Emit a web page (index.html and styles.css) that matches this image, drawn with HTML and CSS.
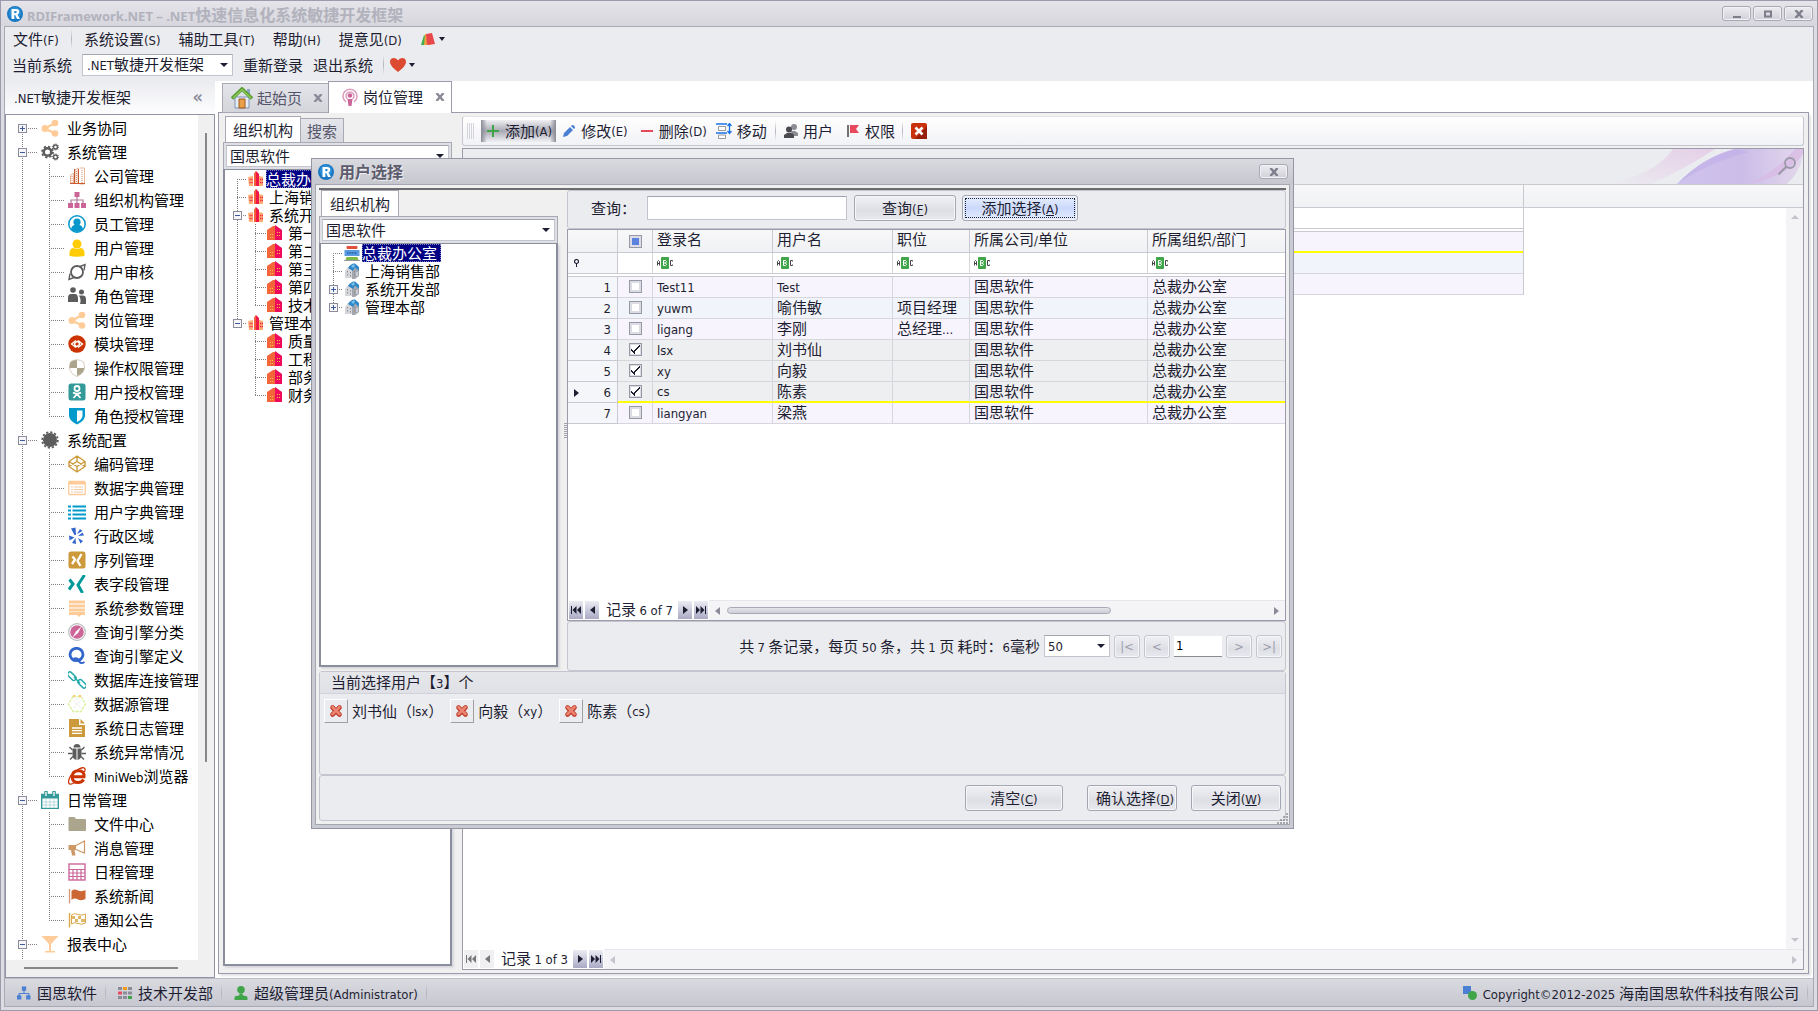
FILE: index.html
```html
<!DOCTYPE html>
<html lang="zh-CN">
<head>
<meta charset="utf-8">
<title>RDIFramework.NET</title>
<link rel="stylesheet" href="styles.css">
</head>
<body>
<svg class="sprite" aria-hidden="true">
  <symbol id="i-logo" viewBox="0 0 16 16"><circle cx="8" cy="8" r="8" fill="#1a78c2"/><circle cx="8" cy="7" r="6" fill="#2a8fd8"/><path d="M4.500 3h4.600q3.200 0 3.200 2.800 0 2-1.900 2.600L13 13h-2.900L8.200 8.900H7.300V13H4.500zM7.300 5v2.200h1.400q1.100 0 1.100-1.100T8.700 5z" fill="#fff"/></symbol>
  <symbol id="i-share" viewBox="0 0 18 18"><path d="M4 9.500 14 4M4 9.500 14 14.500" stroke="#fc9" stroke-width="2.500"/><circle cx="4" cy="9.500" r="3.500" fill="#fc9"/><circle cx="14" cy="4" r="3.300" fill="#fc9"/><circle cx="14" cy="14.500" r="3.300" fill="#fc9"/></symbol>
  <symbol id="i-gears" viewBox="0 0 18 18"><g fill="none" stroke="#5c5c5c"><circle cx="6.500" cy="9" r="3.800" stroke-width="2.600"/><circle cx="6.500" cy="9" r="5.500" stroke-width="1.800" stroke-dasharray="2.200 2.100"/><circle cx="14.500" cy="4" r="2" stroke-width="1.500"/><circle cx="14.500" cy="4" r="3" stroke-dasharray="1.200 1.100"/><circle cx="14.500" cy="14" r="2" stroke-width="1.500"/><circle cx="14.500" cy="14" r="3" stroke-dasharray="1.200 1.100"/></g></symbol>
  <symbol id="i-company" viewBox="0 0 18 18"><path d="M2.500 17V8l3-1.500V17M7 17V3l3-2v16M11.500 1h5v16h-5" fill="none" stroke="#e8b49c"/><path d="M8.500 4v12M4 9v7M14 3v13" stroke="#d98a66" stroke-dasharray="1 1"/><path d="M6.500 2v15M10.500 2v15M2 16.500h15" stroke="#c95b2e"/></symbol>
  <symbol id="i-sitemap" viewBox="0 0 18 18"><path d="M3 12V9h12v3M9 4v8" fill="none" stroke="#aa7b97" stroke-width="1.200"/><path d="M6.500 1h5v5h-5zM0 12h5v5H0zM6.500 12h5v5h-5zM13 12h5v5h-5z" fill="#c69"/></symbol>
  <symbol id="i-staff" viewBox="0 0 18 18"><circle cx="9" cy="9" r="8.200" fill="#fff" stroke="#0997cc" stroke-width="1.500"/><circle cx="9" cy="7" r="3.600" fill="#0997cc"/><path d="M3 14q1-4 4-4h4q3 0 4 4-2.500 3-6 3t-6-3z" fill="#0997cc"/></symbol>
  <symbol id="i-user" viewBox="0 0 18 18"><circle cx="9" cy="5" r="4.500" fill="#fc0"/><path d="M1.500 17v-3.500q.5-4.500 4-4.500 3.500 2 7 0 3.500 0 4 4.500V17q-7.500 1.500-15 0z" fill="#fc0"/></symbol>
  <symbol id="i-audit" viewBox="0 0 18 18"><circle cx="9" cy="9" r="6" fill="none" stroke="#5c5c5c" stroke-width="1.800"/><path d="M12 3.500l5-2-1 6M6 14.500l-5 2 1-6" fill="none" stroke="#5c5c5c" stroke-width="1.400"/></symbol>
  <symbol id="i-roles" viewBox="0 0 18 18"><g fill="#5c5c5c"><circle cx="5" cy="3" r="2.800"/><path d="M0 14V11q0-4 3-4h4q3 0 3 5v3H0z"/><circle cx="13.500" cy="5" r="2.500"/><path d="M11 8.500h4q3 0 3 4V17h-6q1.500-4-1-8.500z"/></g></symbol>
  <symbol id="i-module" viewBox="0 0 18 18"><circle cx="9" cy="9" r="8.700" fill="#c30"/><path d="M8 5.500 3.500 9 8 12.500M10 5.500 14.500 9 10 12.500M6 9l3-2.500M12 9l-3 2.500M9 6l3 3M9 12 6 9" fill="none" stroke="#fff" stroke-width="1.300"/></symbol>
  <symbol id="i-perm" viewBox="0 0 18 18"><path d="M9 .7Q13 1 15.500 3q1 3 1 6-1 6-7.500 8.500Q2.500 15 1.500 9q0-3 1-6Q5 1 9 .7z" fill="#fff" stroke="#d9cdc4"/><path d="M9 1v8H1.500q0-3 1-6Q5 1.200 9 1zM9 9h7.500q-1 5.500-7.500 8z" fill="#aaa58c"/></symbol>
  <symbol id="i-ok" viewBox="0 0 18 18"><rect x=".5" y=".5" width="17" height="17" rx="2.500" fill="#399"/><circle cx="9" cy="5.500" r="2.500" fill="none" stroke="#fff" stroke-width="1.800"/><path d="M5 9.500q4 2.500 8 0M9 11l-3.500 4M9 11l3.500 4" fill="none" stroke="#fff" stroke-width="1.800"/></symbol>
  <symbol id="i-shield" viewBox="0 0 18 18"><path d="M1 1h16v8q-1 5.500-8 8.500Q2 14.500 1 9z" fill="#09c"/><path d="M9 3.500h5.500V9Q14 12.500 9 15z" fill="#fff"/></symbol>
  <symbol id="i-gear" viewBox="0 0 18 18"><circle cx="9" cy="9" r="7" fill="#5c5c5c"/><circle cx="9" cy="9" r="7.800" fill="none" stroke="#5c5c5c" stroke-width="1.800" stroke-dasharray="2.200 1.880"/></symbol>
  <symbol id="i-codepen" viewBox="0 0 18 18"><path d="M9 1l8 5.500v5L9 17l-8-5.500v-5zM1 6.500l8 5 8-5M1 11.500l8-5 8 5M9 1v5.500M9 11.500V17" fill="none" stroke="#cc9a3a" stroke-width="1.400"/></symbol>
  <symbol id="i-card" viewBox="0 0 18 18"><rect x=".7" y="2.500" width="16.600" height="13" rx="1" fill="#fff" stroke="#fc9" stroke-width="1.300"/><path d="M1 4h16" stroke="#fc9" stroke-width="3"/><path d="M3 8h2M6 8h9M3 10.500h2M6 10.500h9M3 13h2M6 13h9" stroke="#f0c9a6"/></symbol>
  <symbol id="i-list" viewBox="0 0 18 18"><path d="M0 3.500h3M4.500 3.500H18M0 7.500h3M4.500 7.500H18M0 11.500h3M4.500 11.500H18M0 15.500h3M4.500 15.500H18" stroke="#09c" stroke-width="2.200"/></symbol>
  <symbol id="i-yelp" viewBox="0 0 18 18"><path d="M3 1.500 7.500.5 8 8 6.500 8zM1 8.500l5.500 2-5 3zM7.500 11l.5 6-4-1zM10 11l5 3-2.500 2.500zM10 9l6-.5-1.500-3zM9 7l3-5 2.500 2z" fill="#36c"/></symbol>
  <symbol id="i-xingsq" viewBox="0 0 18 18"><rect x=".5" y=".5" width="17" height="17" rx="2.500" fill="#cc9a3a"/><path d="M4.500 5.500l2.500 3-3 4.500M13.500 3l-4 7 3 5" fill="none" stroke="#fff" stroke-width="2.300"/></symbol>
  <symbol id="i-xing" viewBox="0 0 18 18"><path d="M1.500 4.500 5 9l-4 5.500M16.500 0 10 10l4.500 8" fill="none" stroke="#099" stroke-width="3"/></symbol>
  <symbol id="i-stack" viewBox="0 0 18 18"><path d="M1 3h16M1 7h16M1 11h16M1 14.500h16" stroke="#fc9" stroke-width="2.800"/><path d="M8 15h6l-3 3z" fill="#fc9"/></symbol>
  <symbol id="i-safari" viewBox="0 0 18 18"><circle cx="9" cy="9" r="8.300" fill="#fff" stroke="#bbb" stroke-width="1.200"/><circle cx="9" cy="9" r="6.800" fill="#c69"/><path d="M13.500 3.500 10 10l-5.500 4.500L8 8.500z" fill="#fff"/></symbol>
  <symbol id="i-quora" viewBox="0 0 18 18"><ellipse cx="8.500" cy="7.500" rx="6.500" ry="6.200" fill="none" stroke="#36c" stroke-width="2.800"/><path d="M6 11.500q3.500-1 5 2.500t5.500 1" fill="none" stroke="#36c" stroke-width="2"/></symbol>
  <symbol id="i-link" viewBox="0 0 18 18"><g fill="none" stroke="#2aa" stroke-width="1.500"><rect x="-1" y="3" width="10" height="4.500" rx="2.200" transform="rotate(45 4 5)"/><rect x="9" y="10.500" width="10" height="4.500" rx="2.200" transform="rotate(45 14 13)"/><path d="M6 6l6 6"/></g></symbol>
  <symbol id="i-hex" viewBox="0 0 18 18"><path d="M5 1.500h8L17.500 9 13 16.500H5L.5 9z" fill="none" stroke="#d8ee9a" stroke-width="1.300" stroke-dasharray="3 1"/><path d="M5 5l8 8M13 5l-8 8M5 1.500 9 5l4-3.500" fill="none" stroke="#eee"/><path d="M5 1h2M11 1h2" stroke="#fc6" stroke-width="2"/></symbol>
  <symbol id="i-file" viewBox="0 0 18 18"><path d="M1 0h10v6h6v12H1zM12.500 0 17 4.500h-4.500z" fill="#cc9a3a"/><path d="M4 9h10M4 11.700h10M4 14.400h10" stroke="#fff" stroke-width="1.300"/></symbol>
  <symbol id="i-bug" viewBox="0 0 18 18"><path d="M5.500 4.500q0-3.500 3.500-3.500t3.500 3.500zM4.500 5.500h4V17q-4-1-4-5zM9.500 5.500h4V12q0 4-4 5z" fill="#5c5c5c"/><path d="M1.500 4l3 3M16.500 4l-3 3M0 10.500h4.500M13.500 10.500H18M2 16.500l3-3M16 16.500l-3-3" stroke="#5c5c5c" stroke-width="1.400"/></symbol>
  <symbol id="i-ie" viewBox="0 0 18 18"><path d="M4 9.800h12q.5-6-5.500-6T4 9.800q.5 5.700 6 5.700 4 0 5.500-3" fill="none" stroke="#c30" stroke-width="3"/><path d="M9 3q7-4 8-1 .3 1-.5 3M3 8Q-1 15 1.500 17q2 .7 5-1.500" fill="none" stroke="#c30" stroke-width="1.300"/></symbol>
  <symbol id="i-calendar" viewBox="0 0 18 18"><rect x=".7" y="3.500" width="16.600" height="14" fill="#fff" stroke="#399" stroke-width="1.400"/><path d="M1 5.500h16" stroke="#399" stroke-width="4"/><path d="M5 8v9M9 8v9M13 8v9M1 11h16M1 14h16" stroke="#a6d2d2" stroke-width=".8"/><path d="M5 1v4M13 1v4" stroke="#399" stroke-width="3.600" stroke-linecap="round"/><path d="M5 1v4M13 1v4" stroke="#fff" stroke-width="1.300"/></symbol>
  <symbol id="i-folder" viewBox="0 0 18 18"><path d="M.5 3q0-1 1-1h5l1.500 2H17q1 0 1 1v10q0 1-1 1H1.500q-1 0-1-1z" fill="#aaa58c"/></symbol>
  <symbol id="i-horn" viewBox="0 0 18 18"><path d="M.5 6H8v5H6.500l1 5.500H4L3 11H.5z" fill="#c96"/><path d="M8 6.500 16.500 2v12L8 10.500" fill="none" stroke="#c96" stroke-width="1.200"/></symbol>
  <symbol id="i-sheet" viewBox="0 0 18 18"><rect x="1" y="1" width="16" height="16" fill="#fff" stroke="#c69" stroke-width="1.400"/><path d="M1 6.500h16M1 10h16M1 13.500h16M5 6v11M9 6v11M13 6v11" stroke="#c69" stroke-width="1.200"/></symbol>
  <symbol id="i-flag" viewBox="0 0 18 18"><path d="M1.500 2v14.500" stroke="#d99a7a" stroke-width="1.400"/><path d="M3.500 4q3-2.500 6.500-.5 4 1.500 7.500-.5v9q-4 2-7.500.5-3.500-2-6.500.5z" fill="#c63"/></symbol>
  <symbol id="i-flag2" viewBox="0 0 18 18"><path d="M1.500 2v14.500" stroke="#d9a84a" stroke-width="1.400"/><path d="M3.500 4q3-2.500 6.500-.5 4 1.500 7.500-.5v9q-4 2-7.500.5-3.500-2-6.500.5z" fill="#fff" stroke="#d9a84a"/><path d="M4 5h3v3H4zM10 5h3v3h-3zM7 8h3v3H7zM13 8h4v3h-4z" fill="#e0b865"/></symbol>
  <symbol id="i-glass" viewBox="0 0 18 18"><path d="M.5 1h17L10 9v7h4v1.500H4V16h4V9z" fill="#fc9"/></symbol>
  <symbol id="i-org" viewBox="0 0 16 16"><path d="M0 6l5-1v10H1z" fill="#ffb27a"/><path d="M11 5l4 1v9h-4z" fill="#fcae70"/><path d="M6 3l2-3 3 3v12H6z" fill="#f01848"/><path d="M6 3l2-3v15H6z" fill="#f4603a"/><path d="M1.500 8.500h3M1.500 11.500h3M12 8.500h3M12 11.500h3" stroke="#f0284c" stroke-width="1.500" stroke-dasharray="1.200 .6"/></symbol>
  <symbol id="i-dept" viewBox="0 0 16 16"><path d="M0 5l6-4h3v14H0z" fill="#f4663a"/><path d="M8 0l7 5v10H8z" fill="#f00a5c"/><path d="M10 7h1v1h-1zM12 7h1v1h-1zM10 10h1v1h-1zM12 10h1v1h-1zM3 9h1v1H3zM5 9h1v1H5zM3 12h1v1H3zM5 12h1v1H5z" fill="#ffc04a"/></symbol>
  <symbol id="i-server" viewBox="0 0 16 16"><rect x="2.500" y="1" width="11" height="3" rx="1" fill="#e0503c"/><rect x=".5" y="5" width="15" height="6" fill="#5a9ae0"/><path d="M3 8h10" stroke="#245aa8" stroke-width="1.500" stroke-dasharray="1 .6"/><path d="M2.500 12h11l1 3h-13z" fill="#7cba4a"/><path d="M0 15.500h16" stroke="#999"/></symbol>
  <symbol id="i-house" viewBox="0 0 16 16"><path d="M1 8l3-4 5 3v8H1z" fill="#d4d6da"/><path d="M8 8l3-4 4 4v5l-4 3H8z" fill="#a4a8ae"/><path d="M4 5q3-5 7-4.500L15 4v4l-4-3.500L9 8z" fill="#2d86c8"/><path d="M7 3l3-2 1 2-2 2z" fill="#7cc0e8"/><path d="M3.500 8v6M6.500 9v6M10.500 8v6" stroke="#8c9098" stroke-dasharray="1.500 1.500"/><path d="M13 9v4" stroke="#eef"/></symbol>
  <symbol id="i-home" viewBox="0 0 22 22"><path d="M4 10h14v11H4z" fill="#e6ecf6" stroke="#7a92b8"/><path d="M8 12h6v9H8z" fill="#e8a04a" stroke="#a05a1a"/><path d="M16 2h3v7h-3z" fill="#8aa4cc"/><path d="M1 11.500 11 2l10 9.500" fill="none" stroke="#5a9c32" stroke-width="3.600"/><path d="M2 11 11 2.500 20 11" fill="none" stroke="#8fce5a" stroke-width="1.200"/></symbol>
  <symbol id="i-podcast" viewBox="0 0 16 18"><g fill="none" stroke="#dc9cbc" stroke-width="1.500"><path d="M4 14A7 7 0 1 1 12 14"/><path d="M5.500 11A4 4 0 1 1 10.500 11"/></g><circle cx="8" cy="7.500" r="2.300" fill="#c69"/><path d="M5.500 11h5l-1 7h-3z" fill="#c69"/></symbol>
  <symbol id="i-abc" viewBox="0 0 16 12"><path d="M.5 8.500v-4l1-1 1 1v4M.5 6.500h2M15.500 4.500v-1h-2v5h2v-1" fill="none" stroke="#444"/><rect x="4" y="0" width="8" height="12" rx="1" fill="#3fa548"/><path d="M6.500 3.500h2l1 1-1 1.500 1 1.500-1 1h-2zM6.500 6h2" fill="none" stroke="#fff"/></symbol>
  <symbol id="i-left" viewBox="0 0 5 8"><path d="M5 0v8L0 4z" fill="currentColor"/></symbol>
  <symbol id="i-right" viewBox="0 0 5 8"><path d="M0 0v8l5-4z" fill="currentColor"/></symbol>
  <symbol id="i-first" viewBox="0 0 10 8"><path d="M0 0h1v8H0zM5.500 0v8l-4-4zM10 0v8L6 4z" fill="currentColor"/></symbol>
  <symbol id="i-last" viewBox="0 0 10 8"><path d="M9 0h1v8H9zM0 0v8l4-4zM4.500 0v8l4-4z" fill="currentColor"/></symbol>
  <symbol id="i-cross" viewBox="0 0 10 8"><path d="M1.500 0 8.500 8M8.500 0 1.500 8" stroke="currentColor" stroke-width="2.400"/></symbol>
  <symbol id="i-del" viewBox="0 0 14 14"><path d="M3.500 3.500l7 7M10.500 3.500l-7 7" stroke="#c0402e" stroke-width="4.600" stroke-linecap="round"/><path d="M3.500 3.200l7 7M10.500 3.200l-7 7" stroke="#ec8672" stroke-width="2.600" stroke-linecap="round"/></symbol>
</svg>

<header class="titlebar">
  <svg class="logo"><use href="#i-logo"/></svg>
  <h1><span class="en">RDIFramework.NET – .NET</span>快速信息化系统敏捷开发框架</h1>
  <button class="winbtn" aria-label="最小化"><svg viewBox="0 0 10 8"><path d="M1 7h8" stroke="currentColor" stroke-width="2"/></svg></button>
  <button class="winbtn" aria-label="最大化"><svg viewBox="0 0 10 8"><path d="M2 1.500h6v5H2z" fill="none" stroke="currentColor" stroke-width="2"/></svg></button>
  <button class="winbtn" aria-label="关闭窗口"><svg><use href="#i-cross"/></svg></button>
</header>

<div class="client">
  <nav class="menubar">
    <button>文件<span class="en">(F)</span></button><i class="sep"></i>
    <button>系统设置<span class="en">(S)</span></button>
    <button>辅助工具<span class="en">(T)</span></button>
    <button>帮助<span class="en">(H)</span></button>
    <button>提意见<span class="en">(D)</span></button>
    <button class="drop" aria-label="皮肤"><svg viewBox="0 0 16 16"><path d="M1 14 4 4l4 3v7z" fill="#3fb04c"/><path d="M4 14 5 3l6 1v10z" fill="#f0a040"/><path d="M6 3l6-1 3 11-8 1z" fill="#e8484c"/></svg></button>
  </nav>
  <div class="sysbar">
    <label for="sys">当前系统</label>
    <span class="combo sys"><select id="sys"><option>.NET敏捷开发框架</option></select><span class="shown" aria-hidden="true"><span class="en">.NET</span>敏捷开发框架</span></span>
    <button>重新登录</button>
    <button>退出系统</button>
    <i class="sep"></i>
    <button class="drop" aria-label="收藏"><svg viewBox="0 0 16 16"><path d="M8 15Q0 9 0 5t4-4q3 0 4 2.500Q9 1 12 1q4 0 4 4t-8 10z" fill="#dc4a32"/></svg></button>
  </div>

  <main class="main">
    <aside class="side">
      <div class="side-head"><span><span class="en">.NET</span>敏捷开发框架</span><button aria-label="折叠">«</button></div>
      <div class="side-box">
        <ul class="tree nav">
          <li><div class="node"><button class="exp plus" aria-label="展开"></button><svg><use href="#i-share"/></svg><a href="#">业务协同</a></div></li>
          <li><div class="node"><button class="exp" aria-label="折叠"></button><svg><use href="#i-gears"/></svg><a href="#">系统管理</a></div>
            <ul>
              <li><svg><use href="#i-company"/></svg><a href="#">公司管理</a></li>
              <li><svg><use href="#i-sitemap"/></svg><a href="#">组织机构管理</a></li>
              <li><svg><use href="#i-staff"/></svg><a href="#">员工管理</a></li>
              <li><svg><use href="#i-user"/></svg><a href="#">用户管理</a></li>
              <li><svg><use href="#i-audit"/></svg><a href="#">用户审核</a></li>
              <li><svg><use href="#i-roles"/></svg><a href="#">角色管理</a></li>
              <li><svg><use href="#i-share"/></svg><a href="#">岗位管理</a></li>
              <li><svg><use href="#i-module"/></svg><a href="#">模块管理</a></li>
              <li><svg><use href="#i-perm"/></svg><a href="#">操作权限管理</a></li>
              <li><svg><use href="#i-ok"/></svg><a href="#">用户授权管理</a></li>
              <li><svg><use href="#i-shield"/></svg><a href="#">角色授权管理</a></li>
            </ul></li>
          <li><div class="node"><button class="exp" aria-label="折叠"></button><svg><use href="#i-gear"/></svg><a href="#">系统配置</a></div>
            <ul>
              <li><svg><use href="#i-codepen"/></svg><a href="#">编码管理</a></li>
              <li><svg><use href="#i-card"/></svg><a href="#">数据字典管理</a></li>
              <li><svg><use href="#i-list"/></svg><a href="#">用户字典管理</a></li>
              <li><svg><use href="#i-yelp"/></svg><a href="#">行政区域</a></li>
              <li><svg><use href="#i-xingsq"/></svg><a href="#">序列管理</a></li>
              <li><svg><use href="#i-xing"/></svg><a href="#">表字段管理</a></li>
              <li><svg><use href="#i-stack"/></svg><a href="#">系统参数管理</a></li>
              <li><svg><use href="#i-safari"/></svg><a href="#">查询引擎分类</a></li>
              <li><svg><use href="#i-quora"/></svg><a href="#">查询引擎定义</a></li>
              <li><svg><use href="#i-link"/></svg><a href="#">数据库连接管理</a></li>
              <li><svg><use href="#i-hex"/></svg><a href="#">数据源管理</a></li>
              <li><svg><use href="#i-file"/></svg><a href="#">系统日志管理</a></li>
              <li><svg><use href="#i-bug"/></svg><a href="#">系统异常情况</a></li>
              <li><svg><use href="#i-ie"/></svg><a href="#"><span class="en">MiniWeb</span>浏览器</a></li>
            </ul></li>
          <li><div class="node"><button class="exp" aria-label="折叠"></button><svg><use href="#i-calendar"/></svg><a href="#">日常管理</a></div>
            <ul>
              <li><svg><use href="#i-folder"/></svg><a href="#">文件中心</a></li>
              <li><svg><use href="#i-horn"/></svg><a href="#">消息管理</a></li>
              <li><svg><use href="#i-sheet"/></svg><a href="#">日程管理</a></li>
              <li><svg><use href="#i-flag"/></svg><a href="#">系统新闻</a></li>
              <li><svg><use href="#i-flag2"/></svg><a href="#">通知公告</a></li>
            </ul></li>
          <li class="more"><div class="node"><button class="exp" aria-label="折叠"></button><svg><use href="#i-glass"/></svg><a href="#">报表中心</a></div></li>
        </ul>
        <div class="vbar"><i></i></div>
        <div class="hbar"><i></i></div>
      </div>
    </aside>

    <section class="work">
      <div class="tabs">
        <div class="tab"><svg class="home"><use href="#i-home"/></svg><span>起始页</span><button aria-label="关闭起始页"><svg><use href="#i-cross"/></svg></button></div>
        <div class="tab on"><svg class="pod"><use href="#i-podcast"/></svg><span>岗位管理</span><button aria-label="关闭岗位管理"><svg><use href="#i-cross"/></svg></button></div>
        <i class="rest"></i>
      </div>
      <div class="page">
        <div class="orgcol">
          <div class="subtabs"><button class="on">组织机构</button><button>搜索</button></div>
          <div class="combobox"><span class="combo"><select aria-label="公司"><option>国思软件</option></select></span></div>
          <div class="orgbox">
            <ul class="tree small">
              <li><div class="node"><i class="exp none"></i><svg><use href="#i-org"/></svg><span class="sel">总裁办公室</span></div></li>
              <li><div class="node"><i class="exp none"></i><svg><use href="#i-org"/></svg><span>上海销售部</span></div></li>
              <li><div class="node"><button class="exp" aria-label="折叠"></button><svg><use href="#i-org"/></svg><span>系统开发部</span></div>
                <ul>
                  <li><svg><use href="#i-dept"/></svg><span>第一</span></li>
                  <li><svg><use href="#i-dept"/></svg><span>第二</span></li>
                  <li><svg><use href="#i-dept"/></svg><span>第三</span></li>
                  <li><svg><use href="#i-dept"/></svg><span>第四</span></li>
                  <li><svg><use href="#i-dept"/></svg><span>技术</span></li>
                </ul></li>
              <li><div class="node"><button class="exp" aria-label="折叠"></button><svg><use href="#i-org"/></svg><span>管理本部</span></div>
                <ul>
                  <li><svg><use href="#i-dept"/></svg><span>质量</span></li>
                  <li><svg><use href="#i-dept"/></svg><span>工程</span></li>
                  <li><svg><use href="#i-dept"/></svg><span>部务</span></li>
                  <li><svg><use href="#i-dept"/></svg><span>财务</span></li>
                </ul></li>
            </ul>
          </div>
        </div>
        <div class="listcol">
          <div class="toolbar">
            <i class="grip"></i>
            <button class="hot"><svg viewBox="0 0 12 12"><path d="M0 6h12M6 0v12" stroke="#3fa548" stroke-width="2"/></svg>添加<span class="en">(A)</span></button>
            <button><svg viewBox="0 0 12 12"><path d="M0 12l1-4 6-6 3 3-6 6zM8 1l1-1q3 0 3 3l-1 1z" fill="#4a7fd4"/></svg>修改<span class="en">(E)</span></button>
            <button><svg viewBox="0 0 12 12"><path d="M0 6h12" stroke="#e8485c" stroke-width="2"/></svg>删除<span class="en">(D)</span></button>
            <button class="tight"><svg class="i16" viewBox="0 0 16 16"><path d="M0 1h11M0 10h11" stroke="#1a73e8" stroke-width="1.500"/><path d="M2.500 3.500h7v4h-7zM2.500 12h7v3.500h-7z" fill="#fff" stroke="#999"/><path d="M13.500 1v9M11.500 3l2-2.500 2 2.500M11.500 8l2 2.500 2-2.500" fill="none" stroke="#1a73e8" stroke-width="1.300"/></svg>移动</button>
            <i class="sep"></i>
            <button class="tight"><svg class="i14" viewBox="0 0 14 14"><g fill="#8c8c94"><circle cx="10" cy="3" r="3"/><path d="M7 7h4l3 2v3H8z"/></g><g fill="#4a4a50"><circle cx="5" cy="5.500" r="3"/><path d="M0 14v-3q4-3 5-2 3-1 5 2v3z"/></g></svg>用户</button>
            <button><svg viewBox="0 0 12 12"><path d="M1 0v12" stroke="#444" stroke-width="1.500"/><path d="M3 0h9L9 4l3 4H3z" fill="#e8485c"/></svg>权限</button>
            <i class="sep"></i>
            <button class="tight" aria-label="退出"><svg class="i16" viewBox="0 0 16 16"><rect width="16" height="16" rx="2" fill="#c8320c"/><path d="M16 3v13H4z" fill="#96200a"/><path d="M4.500 4.500l7 7M11.500 4.500l-7 7" stroke="#fff" stroke-width="2.600"/></svg></button>
          </div>
          <div class="grid">
            <div class="groupbar">
              <svg viewBox="0 0 240 35" preserveAspectRatio="none" aria-hidden="true">
                <defs>
                  <linearGradient id="g1" x1="0" x2="1" y1="1" y2="0"><stop offset="0" stop-color="#ebecf0"/><stop offset="1" stop-color="#e5cfe8"/></linearGradient>
                  <linearGradient id="g2" x1="0" x2="1"><stop offset="0" stop-color="#cfc4ee"/><stop offset=".5" stop-color="#cbbce8"/><stop offset="1" stop-color="#e3d8ec"/></linearGradient>
                </defs>
                <path d="M40 35Q90 28 110 0h42Q122 20 88 35z" fill="url(#g1)"/>
                <path d="M114 35Q140 8 172 0h68q0 20-16 35z" fill="url(#g2)"/>
                <path d="M114 35Q140 8 172 0q10 2 14 3-40 10-72 32z" fill="#bfaee8" opacity=".6"/>
                <path d="M184 35Q212 24 232 0h8v5q-14 22-56 30z" fill="#d8b8e4" opacity=".7"/>
              </svg>
              <svg class="find" viewBox="0 0 18 18"><circle cx="12" cy="6" r="5" fill="none" stroke="#9a9aa8" stroke-width="1.800"/><path d="M8.500 9.500.500 17.500" stroke="#9a9aa8" stroke-width="2"/></svg>
            </div>
            <div class="gridhead"><i></i></div>
            <div class="gridbody">
              <div class="rows"><i class="filter"></i><i class="r odd cur"></i><i class="r even"></i><i class="r odd"></i></div>
              <div class="vscroll"><i class="up"></i><i class="down"></i></div>
            </div>
            <div class="navbar">
              <button class="off" aria-label="第一条" disabled><svg class="w10"><use href="#i-first"/></svg></button>
              <button class="off" aria-label="上一条" disabled><svg><use href="#i-left"/></svg></button>
              <span class="pos">记录 <span class="en">1 of 3</span></span>
              <button aria-label="下一条"><svg><use href="#i-right"/></svg></button>
              <button aria-label="最后一条"><svg class="w10"><use href="#i-last"/></svg></button>
              <div class="hscroll dim"><svg><use href="#i-left"/></svg><i></i><svg><use href="#i-right"/></svg></div>
            </div>
          </div>
        </div>
      </div>
    </section>
  </main>

  <footer class="status">
    <svg viewBox="0 0 13 12"><path d="M4.500 0h4v4h-4zM0 8h4v4H0zM8.500 8h4v4h-4zM6 4h1v2H6zM1.500 6h10v1h-10zM1.500 7h1v1h-1zM10.500 7h1v1h-1z" fill="#4a7fd4"/></svg><span>国思软件</span><i class="sep"></i>
    <svg viewBox="0 0 14 12"><path d="M0 0h4v3H0zM10 0h4v3h-4zM5 4.500h4v3H5zM10 4.500h4v3h-4zM0 9h4v3H0zM5 9h4v3H5z" fill="#8c8c98"/><path d="M5 0h4v3H5z" fill="#f09a1a"/><path d="M0 4.500h4v3H0z" fill="#e8485c"/><path d="M10 9h4v3h-4z" fill="#3fa548"/></svg><span>技术开发部</span><i class="sep"></i>
    <svg viewBox="0 0 12 13"><circle cx="6" cy="3.500" r="3.500" fill="#3fa548"/><path d="M0 13v-2q0-2 3-2l1.500-.5V7h3v1.500L9 9q3 0 3 2v2z" fill="#3fa548"/></svg><span>超级管理员<span class="en">(Administrator)</span></span><i class="sep"></i>
    <b></b>
    <svg viewBox="0 0 14 14"><path d="M0 0h8v8H0z" fill="#4a7fd4"/><circle cx="9.500" cy="9.500" r="4.500" fill="#3fa548"/></svg><span><span class="en">Copyright©2012-2025 </span>海南国思软件科技有限公司</span><i class="sep"></i>
  </footer>
</div>

<div class="dialog" role="dialog" aria-labelledby="dlg">
  <div class="dlg-title"><svg class="logo"><use href="#i-logo"/></svg><h2 id="dlg">用户选择</h2><button class="winbtn" aria-label="关闭对话框"><svg><use href="#i-cross"/></svg></button></div>
  <div class="dlg-body">
    <div class="dlg-main">
      <div class="dlg-left">
        <div class="subtabs"><button class="on">组织机构</button></div>
        <div class="combobox"><span class="combo"><select aria-label="所属公司"><option>国思软件</option></select></span></div>
        <div class="orgbox">
          <ul class="tree small">
            <li><div class="node"><i class="exp none"></i><svg><use href="#i-server"/></svg><span class="sel">总裁办公室</span></div></li>
            <li><div class="node"><i class="exp none"></i><svg><use href="#i-house"/></svg><span>上海销售部</span></div></li>
            <li><div class="node"><button class="exp plus" aria-label="展开"></button><svg><use href="#i-house"/></svg><span>系统开发部</span></div></li>
            <li><div class="node"><button class="exp plus" aria-label="展开"></button><svg><use href="#i-house"/></svg><span>管理本部</span></div></li>
          </ul>
        </div>
      </div>
      <div class="splitter"><i></i></div>
      <div class="dlg-right">
        <div class="panel query">
          <label for="q">查询：</label><input id="q" type="text">
          <button class="btn find-btn">查询<span class="en">(<u>F</u>)</span></button>
          <button class="btn focus">添加选择<span class="en">(<u>A</u>)</span></button>
        </div>
        <div class="grid users">
          <table>
            <colgroup><col class="c0"><col class="c1"><col class="c2"><col class="c2"><col class="c3"><col class="c4"><col></colgroup>
            <thead>
              <tr><th></th><th class="ck"><i class="mixed"></i></th><th>登录名</th><th>用户名</th><th>职位</th><th>所属公司<span class="en">/</span>单位</th><th>所属组织<span class="en">/</span>部门</th></tr>
              <tr class="filter"><td class="ind"><svg class="pin" viewBox="0 0 5 8"><circle cx="2.500" cy="2.500" r="2" fill="none" stroke="#1e1e32" stroke-width="1.200"/><path d="M2 4h1v4H2z" fill="#1e1e32"/></svg></td><td></td><td><svg><use href="#i-abc"/></svg></td><td><svg><use href="#i-abc"/></svg></td><td><svg><use href="#i-abc"/></svg></td><td><svg><use href="#i-abc"/></svg></td><td><svg><use href="#i-abc"/></svg></td></tr>
              <tr class="gap"><td colspan="7"></td></tr>
            </thead>
            <tbody>
              <tr class="odd"><td class="ind en">1</td><td class="ck"><input type="checkbox" aria-label="选择 Test11"></td><td class="en">Test11</td><td class="en">Test</td><td></td><td>国思软件</td><td>总裁办公室</td></tr>
              <tr class="even"><td class="ind en">2</td><td class="ck"><input type="checkbox" aria-label="选择 yuwm"></td><td class="en">yuwm</td><td>喻伟敏</td><td>项目经理</td><td>国思软件</td><td>总裁办公室</td></tr>
              <tr class="odd"><td class="ind en">3</td><td class="ck"><input type="checkbox" aria-label="选择 ligang"></td><td class="en">ligang</td><td>李刚</td><td>总经理<span class="en">...</span></td><td>国思软件</td><td>总裁办公室</td></tr>
              <tr class="picked"><td class="ind en">4</td><td class="ck"><input type="checkbox" checked aria-label="选择 lsx"></td><td class="en">lsx</td><td>刘书仙</td><td></td><td>国思软件</td><td>总裁办公室</td></tr>
              <tr class="picked"><td class="ind en">5</td><td class="ck"><input type="checkbox" checked aria-label="选择 xy"></td><td class="en">xy</td><td>向毅</td><td></td><td>国思软件</td><td>总裁办公室</td></tr>
              <tr class="picked cur"><td class="ind en"><svg class="mark"><use href="#i-right"/></svg>6</td><td class="ck"><input type="checkbox" checked aria-label="选择 cs"></td><td class="en">cs</td><td>陈素</td><td></td><td>国思软件</td><td>总裁办公室</td></tr>
              <tr class="odd"><td class="ind en">7</td><td class="ck"><input type="checkbox" aria-label="选择 liangyan"></td><td class="en">liangyan</td><td>梁燕</td><td></td><td>国思软件</td><td>总裁办公室</td></tr>
            </tbody>
          </table>
          <div class="fill"></div>
          <div class="navbar">
            <button aria-label="第一条"><svg class="w10"><use href="#i-first"/></svg></button>
            <button aria-label="上一条"><svg><use href="#i-left"/></svg></button>
            <span class="pos">记录 <span class="en">6 of 7</span></span>
            <button aria-label="下一条"><svg><use href="#i-right"/></svg></button>
            <button aria-label="最后一条"><svg class="w10"><use href="#i-last"/></svg></button>
            <div class="hscroll"><svg><use href="#i-left"/></svg><i class="thumb"></i><i></i><svg><use href="#i-right"/></svg></div>
          </div>
        </div>
        <div class="panel pager">
          <span>共 <span class="en">7</span> 条记录，每页 <span class="en">50</span> 条，共 <span class="en">1</span> 页 耗时：<span class="en">6</span>毫秒</span>
          <span class="combo size"><select class="en" aria-label="每页条数"><option>50</option></select></span>
          <button class="btn en" disabled>|&lt;</button>
          <button class="btn en" disabled>&lt;</button>
          <input class="en" type="text" value="1" aria-label="页码">
          <button class="btn en" disabled>&gt;</button>
          <button class="btn en" disabled>&gt;|</button>
        </div>
      </div>
    </div>
    <div class="panel chosen">
      <h3>当前选择用户【<span class="en">3</span>】个</h3>
      <div class="chips">
        <span><button aria-label="移除刘书仙"><svg><use href="#i-del"/></svg></button>刘书仙（<span class="en">lsx</span>）</span>
        <span><button aria-label="移除向毅"><svg><use href="#i-del"/></svg></button>向毅（<span class="en">xy</span>）</span>
        <span><button aria-label="移除陈素"><svg><use href="#i-del"/></svg></button>陈素（<span class="en">cs</span>）</span>
      </div>
    </div>
    <div class="panel actions">
      <button class="btn">清空<span class="en">(<u>C</u>)</span></button>
      <button class="btn">确认选择<span class="en">(<u>D</u>)</span></button>
      <button class="btn">关闭<span class="en">(<u>W</u>)</span></button>
    </div>
    <svg class="resize" viewBox="0 0 12 12"><path d="M9 2h2M6 5h2M9 5h2M3 8h2M6 8h2M9 8h2M0 11h2M3 11h2M6 11h2M9 11h2" stroke="#8c8c94" stroke-width="1.500"/></svg>
  </div>
</div>
</body>
</html>
```

FILE: styles.css
```css
* { box-sizing: border-box; }
html, body { height: 100%; }
body {
  margin: 0; display: flex; flex-direction: column; position: relative; overflow: hidden;
  border: 1px solid #9b9bac; background: #dcdce3; color: #1e1e32;
  font: 15px/18px "Noto Sans CJK SC", sans-serif; white-space: nowrap;
}
button, input, select { font: inherit; color: inherit; margin: 0; }
button { background: none; border: 0; padding: 0; }
a { color: inherit; text-decoration: none; }
ul { list-style: none; margin: 0; padding: 0; }
h1, h2, h3 { margin: 0; font-weight: 400; font-size: 15px; }
svg { display: block; flex: none; }
.sprite { position: absolute; width: 0; height: 0; }
.en { font-family: "DejaVu Sans Condensed", "Noto Sans", sans-serif; font-size: 13px; line-height: 13px; }

/* window frame */
.titlebar { display: flex; align-items: center; height: 25px; flex: none; padding: 0 4px 0 6px; gap: 2px; background: linear-gradient(#e4e4ea, #d6d6dc); }
.logo { width: 16px; height: 16px; }
.titlebar h1 { flex: 1; margin-left: 2px; font-size: 16px; font-weight: 700; color: #b2b2bd; }
.titlebar .en { font-family: "Noto Sans", sans-serif; }
.winbtn { width: 29px; height: 15px; display: flex; align-items: center; justify-content: center; border: 1px solid #a9a9b5; border-radius: 3px; background: linear-gradient(#ececf0, #d0d0d8); box-shadow: inset 0 0 0 1px #f2f2f5; color: #7d7d8c; }
.winbtn svg { width: 10px; height: 8px; }
.client { flex: 1; min-height: 0; display: flex; flex-direction: column; margin: 0 3px 3px; border: 1px solid #a9a9b5; background: #ebecf0; }
.sep { width: 1px; height: 20px; flex: none; background: linear-gradient(transparent, #b4b4c0, transparent); }

.menubar { display: flex; align-items: center; height: 24px; padding: 0 8px; gap: 18px; }
.menubar .sep { margin: 0 -6px; }
.sysbar { display: flex; align-items: center; height: 30px; padding: 0 7px 3px; gap: 10px; }
.drop { display: flex; align-items: center; gap: 3px; }
.drop svg { width: 16px; height: 16px; }
.sysbar .drop { margin-left: -4px; }
.drop::after, .combo::after { content: ""; border: 3px solid transparent; border-top: 4px solid #1e1e32; border-bottom: 0; }

.combo { position: relative; display: block; }
.combo::after { position: absolute; right: 5px; top: 9px; border-width: 4px 4px 0; pointer-events: none; }
.combo select { appearance: none; display: block; width: 100%; height: 22px; padding: 0 5px; border: 1px solid #c4c4ce; border-top-color: #a4a4b0; border-radius: 0; background: #fff; }
.combo.sys { width: 151px; }
.combo.sys select { color: transparent; }
.shown { position: absolute; left: 5px; top: 1px; pointer-events: none; }

.main { flex: 1; min-height: 0; display: flex; gap: 3px; background: #fff; }

/* navigation */
.side { width: 210px; flex: none; display: flex; flex-direction: column; }
.side-head { height: 33px; flex: none; display: flex; align-items: center; justify-content: space-between; padding: 0 12px 2px 9px; background: linear-gradient(#ebecf0, #fdfdfe); }
.side-head button { font: 700 18px/20px "DejaVu Sans Condensed", "Noto Sans", sans-serif; color: #8b8b9a; }
.side-box { flex: 1; min-height: 0; display: grid; grid-template: 1fr 16px / 1fr 16px; border: 1px solid #8f93a3; background: #f0f0f0; padding: 0 0 1px; }
.vbar { display: flex; justify-content: center; padding: 18px 0 0; }
.vbar i { width: 2px; height: 76%; background: #888; }
.hbar { grid-column: 1 / 3; padding: 7px 36px 0 18px; }
.hbar i { display: block; height: 2px; background: #888; }

.tree { background: #fff; color: #000; overflow: hidden; }
.tree li { background: repeating-linear-gradient(#808080 0 1px, transparent 1px 2px) no-repeat; }
.tree li li, .node { display: flex; align-items: center; }
.exp { width: 9px; height: 9px; flex: none; border: 1px solid #8c8c9c; background: linear-gradient(#3c5a9c, #3c5a9c) center / 5px 1px no-repeat #f6f6f8; }
.exp.plus { background: linear-gradient(#3c5a9c, #3c5a9c) center / 5px 1px no-repeat, linear-gradient(#3c5a9c, #3c5a9c) center / 1px 5px no-repeat, #f6f6f8; }
.exp.none { visibility: hidden; }

.nav { padding-top: 1px; }
.nav > li { background-size: 1px 100%; background-position: 16px 0; }
.nav > li:first-child { background-position: 16px 12px; }
.nav .node, .nav li li { height: 24px; gap: 8px; }
.nav a { padding-bottom: 1px; }
.nav .node { padding-left: 12px; background: repeating-linear-gradient(90deg, #808080 0 1px, transparent 1px 2px) 22px 12px / 9px 1px no-repeat; }
.nav .node svg { margin-left: 6px; }
.nav svg { width: 18px; height: 18px; }
.nav li li { padding-left: 62px; background-image: repeating-linear-gradient(#808080 0 1px, transparent 1px 2px), repeating-linear-gradient(90deg, #808080 0 1px, transparent 1px 2px); background-size: 1px 100%, 15px 1px; background-position: 43px 0, 43px 12px; background-repeat: no-repeat; }
.nav li li:last-child { background-size: 1px 12px, 15px 1px; }
.nav .more { padding-bottom: 24px; }

.small { line-height: 18px; }
.small > li { background-size: 1px 100%; background-position: 12px 0; }
.small > li:first-child { background-position: 12px 9px; }
.small > li:last-child { background-size: 1px 9px; }
.small .node, .small li li { height: 18px; gap: 3px; }
.small .node { padding-left: 8px; background: repeating-linear-gradient(90deg, #808080 0 1px, transparent 1px 2px) 12px 9px / 10px 1px no-repeat; }
.small .node svg { margin-left: 3px; }
.small svg { width: 16px; height: 16px; }
.small li li { padding-left: 42px; background-image: repeating-linear-gradient(#808080 0 1px, transparent 1px 2px), repeating-linear-gradient(90deg, #808080 0 1px, transparent 1px 2px); background-size: 1px 100%, 11px 1px; background-position: 30px 0, 30px 9px; background-repeat: no-repeat; }
.small li li:last-child { background-size: 1px 9px, 11px 1px; }
.small span { padding: 0 2px; }
.small .sel { margin-left: -1px; padding: 0 4px 0 0; background: #000084; color: #fff; outline: 1px dotted #8080c0; outline-offset: -1px; }

/* work area */
.work { flex: 1; min-width: 0; display: flex; flex-direction: column; padding: 0 4px 4px 0; }
.tabs { display: flex; height: 32px; flex: none; align-items: flex-end; padding-left: 4px; background: linear-gradient(#9b9bac, #9b9bac) 0 100% / 5px 1px no-repeat; }
.tab { display: flex; align-items: center; gap: 4px; width: 106px; height: 30px; padding: 0 5px 0 8px; border: 1px solid #a9a9b5; border-right: 0; background: linear-gradient(#e4e5ea, #d4d5db); color: #55556a; }
.tab.on { width: 124px; height: 32px; gap: 5px; padding: 0 6px 2px 13px; border: 1px solid #9b9bac; border-bottom: 0; background: #fff; color: #1e1e32; }
.tab button { margin-left: auto; color: #8b8b98; }
.tab button svg { width: 10px; height: 8px; }
.home { width: 22px; height: 22px; }
.pod { width: 16px; height: 18px; }
.rest { flex: 1; border-bottom: 1px solid #9b9bac; }
.page { flex: 1; min-height: 0; display: flex; gap: 10px; padding: 3px 4px 3px; border: 1px solid #9b9bac; border-top: 0; background: #f0f0f0; box-shadow: 2px 2px 2px #e4e4e8; }
.orgcol { width: 229px; flex: none; display: flex; flex-direction: column; padding-bottom: 4px; }
.subtabs { display: flex; align-items: flex-end; height: 26px; flex: none; padding-left: 2px; }
.subtabs button { height: 24px; padding: 0 6px; border: 1px solid #a9a9b5; border-left: 0; border-bottom: 0; background: linear-gradient(#e4e5ea, #d8d9df); color: #55556a; }
.subtabs .on { height: 26px; padding: 0 7px; border-left: 1px solid #a9a9b5; background: #fff; color: #1e1e32; }
.combobox { flex: none; padding: 2px; border: 1px solid #a9a9b5; border-bottom: 0; background: #dfe0e6; }
.combobox select { padding: 0 3px 1px; }
.orgbox { flex: 1; display: flex; border: 2px solid #8a8e9c; border-top-width: 1px; background: #fff; box-shadow: 2px 2px 2px #d8d8dc; }
.orgbox .tree { flex: 1; }

.listcol { flex: 1; min-width: 0; display: flex; flex-direction: column; gap: 2px; }
.toolbar { display: flex; align-items: center; height: 30px; flex: none; padding: 0 4px; border: 1px solid #c6c6d0; border-top-color: #e4e4ea; border-radius: 3px; background: linear-gradient(#fff, #f1f2f6); }
.toolbar button { display: flex; align-items: center; height: 22px; padding: 0 6px; margin-right: 1px; }
.toolbar button svg { width: 12px; height: 12px; margin-right: 6px; }
.toolbar .tight { padding: 0 2px; margin-right: 6px; }
.toolbar .tight svg { margin-right: 5px; }
.toolbar .tight .i16 { width: 16px; height: 16px; }
.toolbar .tight .i14 { width: 14px; height: 14px; }
.toolbar .hot { padding: 0 4px 0 6px; background: linear-gradient(90deg, #8b8b96 0, transparent 8%, transparent 92%, #8b8b96), linear-gradient(#f0f0f4, #a9a9b4 50%, #f0f0f4); }
.toolbar .sep { margin-right: 6px; }
.grip { width: 7px; height: 16px; margin-right: 7px; background: repeating-linear-gradient(90deg, #d4d4dc 0 1px, transparent 1px 2px); }

.grid { flex: 1; min-height: 0; display: flex; flex-direction: column; border: 1px solid #9b9bac; background: #fff; }
.groupbar { height: 35px; flex: none; display: flex; justify-content: flex-end; position: relative; background: #ebecf0; }
.groupbar svg { width: 240px; height: 35px; }
.groupbar .find { position: absolute; right: 7px; top: 8px; width: 18px; height: 18px; }
.gridhead { height: 24px; flex: none; border: solid #c9c9d2; border-width: 1px 0; background: linear-gradient(#f8f8f9, #f0f1f4); }
.gridhead i, .rows { display: block; width: 1061px; height: 100%; border-right: 1px solid #c9c9d2; }
.gridbody { flex: 1; display: flex; justify-content: space-between; }
.rows { height: auto; align-self: flex-start; }
.rows i { display: block; height: 21px; border-bottom: 1px solid #d6d6dd; }
.rows .filter { height: 24px; border-bottom: 1px solid #c9c9d2; background: linear-gradient(#c9c9d2, #c9c9d2) 0 20px / 100% 1px no-repeat; }
.rows .cur { border-bottom: 2px solid #ff0; }
.odd { background: #f7f4fe; }
.even { background: #f1f5fb; }
.picked { background: #eeeff1; }
.vscroll { width: 17px; display: flex; flex-direction: column; justify-content: space-between; align-items: center; padding: 7px 0; background: #f4f4f7; }
.up, .down { border: solid transparent; border-width: 0 4px 4px; border-bottom-color: #c4c4cc; }
.down { border-width: 4px 4px 0; border-top-color: #c4c4cc; }

.navbar { display: flex; align-items: stretch; height: 20px; flex: none; padding-left: 1px; gap: 2px; }
.navbar button { width: 14px; height: 18px; margin: 1px 0; display: flex; align-items: center; justify-content: center; background: linear-gradient(#ececf4, #a9a9c4); color: #1e1e32; }
.navbar .off { background: #f0f0f2; color: #777; }
.navbar svg, .mark { width: 5px; height: 8px; }
.navbar .w10 { width: 10px; }
.pos { width: 75px; padding-left: 5px; line-height: 18px; }
.hscroll { flex: 1; display: flex; align-items: center; justify-content: space-between; gap: 7px; padding: 0 6px; margin-left: -1px; border-top: 1px solid #e6e6ec; background: #f4f4f7; color: #8b8b98; }
.dim { color: #c4c4cc; }
.thumb { width: 384px; height: 7px; margin-right: auto; border: 1px solid #a9a9b5; border-radius: 4px; background: linear-gradient(#e4e4ea, #cdced6); }

.status { display: flex; align-items: center; height: 28px; flex: none; padding: 0 5px 0 12px; border-top: 1px solid #bdbdc8; background: linear-gradient(#dadbe0, #c6c7d0); }
.status svg { width: 14px; height: 14px; margin-right: 6px; }
.status .sep { margin: 0 12px 0 8px; }
.status b { flex: 1; }
.status .sep:last-child { margin-right: 0; }

/* user picker window */
.dialog { position: absolute; left: 310px; top: 157px; width: 983px; height: 671px; display: flex; flex-direction: column; padding: 0 3px 3px; border: 1px solid #9496a4; background: #c9cad2; }
.dlg-title { display: flex; align-items: center; height: 25px; flex: none; margin: 0 -3px; padding: 0 5px 0 6px; gap: 5px; background: linear-gradient(#dadbe0, #c6c7ce); }
.dlg-title h2 { flex: 1; padding-bottom: 2px; font-size: 16px; font-weight: 700; color: #5c5c6c; text-shadow: 1px 1px 0 #f0f0f4; }
.dlg-body { flex: 1; min-height: 0; display: flex; flex-direction: column; position: relative; padding: 3px; border: 1px solid #a4a6b2; background: #f0f0f0; }
.dlg-main { flex: 1; min-height: 0; display: flex; border-top: 2px solid #6c6c70; }
.dlg-left { width: 239px; flex: none; display: flex; flex-direction: column; padding-bottom: 4px; }
.splitter { width: 9px; display: flex; align-items: center; justify-content: flex-end; }
.splitter i { width: 3px; height: 15px; background: repeating-linear-gradient(#a4a4ac 0 1px, transparent 1px 2px); }
.dlg-right { flex: 1; min-width: 0; display: flex; flex-direction: column; }
.panel { border: 1px solid #c4c5ce; border-radius: 3px; background: #ebecf0; }
.dlg-left .subtabs .on { padding: 0 8px; }

.query { height: 39px; flex: none; display: flex; align-items: center; padding: 0 8px 4px 23px; }
.query label { width: 56px; }
.query input { width: 200px; height: 24px; margin-right: 7px; border: 1px solid #c4c4ce; border-top-color: #a4a4b0; background: #fff; }
.btn { height: 26px; padding: 0 8px; border: 1px solid #a4a6b2; border-radius: 3px; background: linear-gradient(#f0f0f4, #dedfe5 60%, #e8e9ee); box-shadow: inset 0 0 0 1px #f6f6f9; }
.find-btn { width: 102px; margin-right: 6px; }
.btn.focus { width: 116px; background: linear-gradient(#e8effe, #ccd9fb 50%, #e4ecfe); outline: 1px dotted #1e1e32; outline-offset: -4px; }

table { width: 100%; table-layout: fixed; border-collapse: separate; border-spacing: 0; }
.c0 { width: 50px; } .c1 { width: 35px; } .c2 { width: 120px; } .c3 { width: 77px; } .c4 { width: 178px; }
th, td { height: 21px; padding: 0 0 2px 4px; line-height: 18px; text-align: left; vertical-align: top; font-weight: 400; border: solid #d6d6dd; border-width: 0 1px 1px 0; }
td.en { padding: 2px 0 0 4px; line-height: 18px; }
th:last-child, td:last-child { border-right: 0; }
th { height: 23px; border-color: #c9c9d2; background: linear-gradient(#f8f8f9, #f0f1f4); }
td.ind { padding: 2px 6px 0 6px; border-color: #c9c9d2; background: #f5f6f9; text-align: right; }
.filter td { padding-top: 4px; border-bottom-color: #c9c9d2; }
td.ind .pin { margin-top: 2px; }
.filter svg { width: 16px; height: 12px; }
.filter .pin { width: 5px; height: 8px; }
.gap td { height: 3px; padding: 0; border-color: #c9c9d2; line-height: 1px; }
.cur td { padding-bottom: 1px; border-bottom: 2px solid #ff0; }
.cur td.en { padding: 1px 0 0 4px; }
.cur td.ind { padding: 2px 6px 0 6px; border-bottom: 1px solid #c9c9d2; }
.mark { float: left; margin-top: 5px; }
td.ck, th.ck { padding: 3px 0 0; text-align: center; }
th.ck { padding-top: 5px; }
.ck input, .mixed { appearance: none; display: block; width: 13px; height: 13px; margin: 0 auto; border: 1px solid #9698a6; background: #fff; box-shadow: inset 0 0 0 2px #dcdde4; }
.mixed { background: #5c82e0; }
.ck input:checked { background: linear-gradient(-45deg, transparent 44%, #1e1e32 44% 58%, transparent 58%) 3px 0 / 8px 9px no-repeat, linear-gradient(45deg, transparent 36%, #1e1e32 36% 64%, transparent 64%) 1px 5px / 4px 5px no-repeat, #fff; box-shadow: inset 0 0 0 1px #dcdde4; }
.fill { flex: 1; }

.pager { height: 50px; flex: none; display: flex; align-items: center; justify-content: flex-end; padding: 0 3px 0 0; gap: 4px; }
.pager .combo { width: 66px; }
.pager select { padding: 0 3px; }
.pager .btn { width: 26px; height: 23px; padding: 0; color: #9c9eae; border-color: #c4c5ce; }
.pager input { width: 48px; height: 21px; padding: 0 2px; border: 0; border-bottom: 1px solid #8b8b8b; background: #fff; color: #000; }

.chosen { height: 104px; flex: none; }
.chosen h3 { height: 22px; padding-left: 11px; line-height: 20px; border-bottom: 1px solid #d2d3da; background: linear-gradient(#e6e7eb, #e0e1e6); }
.chips { display: flex; gap: 7px; padding: 5px 4px; }
.chips > span { display: flex; align-items: center; }
.chips button { width: 24px; height: 24px; margin-right: 4px; display: flex; align-items: center; justify-content: center; border: 1px solid #fff; border-right-color: #a0a0a0; border-bottom-color: #a0a0a0; }
.chips svg { width: 14px; height: 14px; }
.actions { height: 46px; flex: none; display: flex; align-items: center; justify-content: flex-end; gap: 14px; padding: 0 4px 1px; }
.actions .btn { width: 90px; }
.actions .btn:first-child { width: 98px; margin-right: 10px; }
.resize { position: absolute; right: 0; bottom: 0; width: 12px; height: 12px; }
```
